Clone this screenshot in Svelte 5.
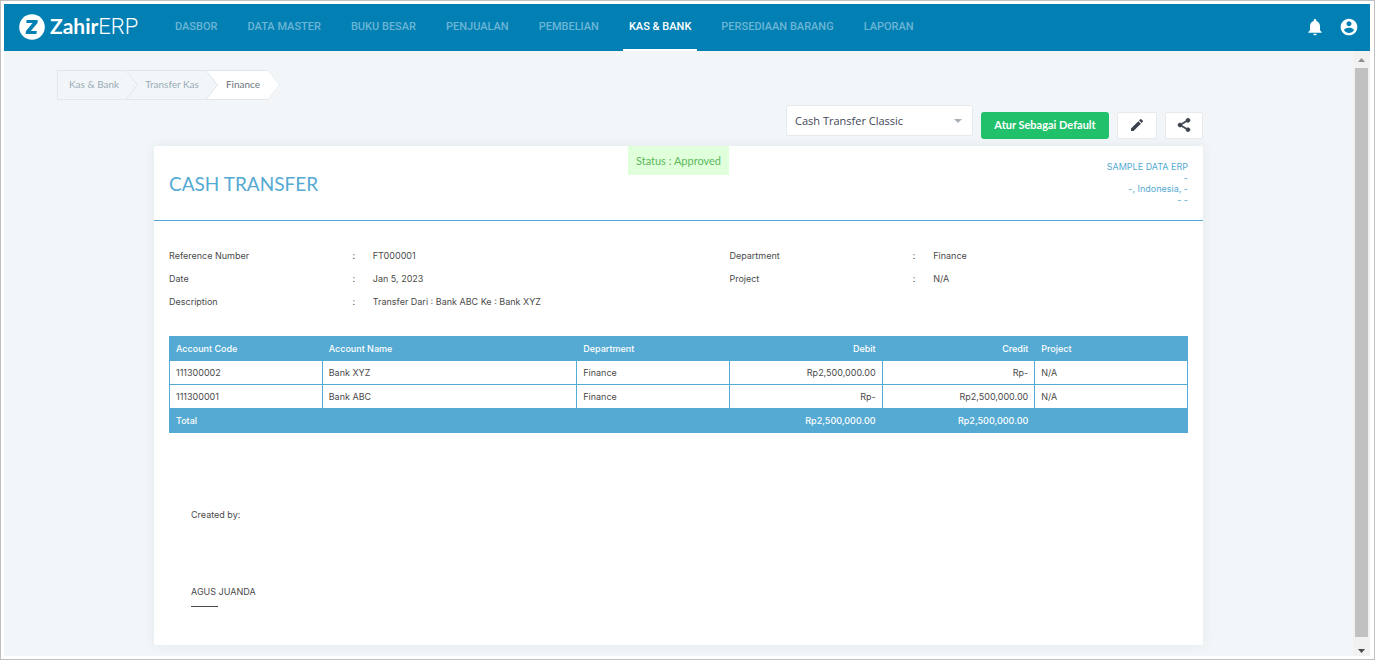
<script>
  const menu = ['Dasbor', 'Data Master', 'Buku Besar', 'Penjualan', 'Pembelian', 'Kas & Bank', 'Persediaan Barang', 'Laporan'];
  const activeMenu = 'Kas & Bank';

  const info = [
    ['Reference Number', 'FT000001', 'Department', 'Finance'],
    ['Date', 'Jan 5, 2023', 'Project', 'N/A'],
    ['Description', 'Transfer Dari : Bank ABC Ke : Bank XYZ', '', '']
  ];

  const entries = [
    { code: '111300002', name: 'Bank XYZ', dept: 'Finance', debit: 'Rp2,500,000.00', credit: 'Rp-', project: 'N/A' },
    { code: '111300001', name: 'Bank ABC', dept: 'Finance', debit: 'Rp-', credit: 'Rp2,500,000.00', project: 'N/A' }
  ];
</script>

<div class="window">
  <header class="topbar">
    <a class="logo" href="#home">
      <svg width="26" height="26" viewBox="0 0 26 26" aria-hidden="true">
        <circle cx="13" cy="13" r="12.8" fill="#fff" />
        <path d="M7.600 6h11.200l-.3 2.900-6.700 8.200h6l-.4 2.900H6.600l.4-3 6.600-8.100H7.300z" fill="#0280b4" />
      </svg>
      <span class="brand">Zahir<span class="erp">ERP</span></span>
    </a>
    <nav class="menu">
      {#each menu as item}
        <a href="#menu" class:active={item === activeMenu}>{item}</a>
      {/each}
    </nav>
    <div class="account">
      <button type="button" aria-label="Notifikasi">
        <svg width="20" height="20" viewBox="0 0 24 24" fill="#fff"><path d="M12 22c1.1 0 2-.9 2-2h-4c0 1.1.89 2 2 2zm6-6v-5c0-3.07-1.64-5.64-4.5-6.32V4c0-.83-.67-1.5-1.5-1.5s-1.5.67-1.5 1.5v.68C7.63 5.36 6 7.92 6 11v5l-2 2v1h16v-1l-2-2z" /></svg>
      </button>
      <button type="button" aria-label="Akun">
        <svg width="20" height="20" viewBox="0 0 24 24" fill="#fff"><path d="M12 2C6.48 2 2 6.48 2 12s4.48 10 10 10 10-4.48 10-10S17.52 2 12 2zm0 3c1.66 0 3 1.34 3 3s-1.34 3-3 3-3-1.34-3-3 1.34-3 3-3zm0 14.2c-2.5 0-4.71-1.28-6-3.22.03-1.99 4-3.08 6-3.08 1.99 0 5.97 1.09 6 3.08-1.29 1.94-3.5 3.22-6 3.22z" /></svg>
      </button>
    </div>
  </header>

  <div class="viewport">
    <main>
      <nav class="crumbs" aria-label="Breadcrumb">
        <a class="first" href="#kas">Kas &amp; Bank</a>
        <svg width="12" height="30" viewBox="0 0 12 30" fill="none" stroke="#e1e7ea"><path d="M0 .5h12M0 29.5h12M0 .5L11.5 15 0 29.5" /></svg>
        <a href="#transfer">Transfer Kas</a>
        <svg width="12" height="30" viewBox="0 0 12 30" fill="none" stroke="#e1e7ea"><path d="M0 0h12v30H0l11.5-15z" fill="#fff" stroke="none" /><path d="M0 .5h12M0 29.5h12M0 .5L11.5 15 0 29.5" /></svg>
        <span class="current">Finance</span>
        <svg width="12" height="30" viewBox="0 0 12 30" fill="#fff" stroke="#e9eef1"><path d="M0 .5L11.5 15 0 29.5" /></svg>
      </nav>

      <div class="toolbar">
        <div class="picker">
          <select aria-label="Template">
            <option>Cash Transfer Classic</option>
          </select>
          <svg width="8" height="4" viewBox="0 0 8 4" aria-hidden="true"><path d="M0 0h8L4 4z" fill="#a9b0b8" /></svg>
        </div>
        <button type="button" class="primary">Atur Sebagai Default</button>
        <button type="button" class="tool edit" aria-label="Ubah">
          <svg width="16" height="16" viewBox="0 0 24 24" fill="#3a414b"><path d="M3 17.25V21h3.75L17.81 9.94l-3.75-3.75L3 17.25zM20.71 7.04c.39-.39.39-1.02 0-1.41l-2.34-2.34c-.39-.39-1.02-.39-1.41 0l-1.83 1.83 3.75 3.75 1.83-1.83z" /></svg>
        </button>
        <button type="button" class="tool" aria-label="Bagikan">
          <svg width="16" height="16" viewBox="0 0 24 24" fill="#3a414b" stroke="#3a414b"><path d="M18 16.08c-.76 0-1.44.3-1.96.77L8.91 12.7c.05-.23.09-.46.09-.7s-.04-.47-.09-.7l7.05-4.11c.54.5 1.25.81 2.04.81 1.66 0 3-1.34 3-3s-1.34-3-3-3-3 1.34-3 3c0 .24.04.47.09.7L8.04 9.81C7.5 9.31 6.79 9 6 9c-1.66 0-3 1.34-3 3s1.34 3 3 3c.79 0 1.5-.31 2.04-.81l7.12 4.16c-.05.21-.08.43-.08.65 0 1.61 1.31 2.92 2.92 2.92s2.92-1.31 2.92-2.92-1.31-2.92-2.92-2.92z" /></svg>
        </button>
      </div>

      <article class="sheet">
        <header class="sheet-head">
          <h1>CASH TRANSFER</h1>
          <div class="status">Status : Approved</div>
          <address>SAMPLE DATA ERP<br />-<br />-, Indonesia, -<br />- -</address>
        </header>

        <div class="sheet-body">
          <div class="info">
            {#each info as [labelA, valueA, labelB, valueB]}
              <span>{labelA}</span><span>:</span><span>{valueA}</span>
              <span>{labelB}</span><span>{labelB ? ':' : ''}</span><span>{valueB}</span>
            {/each}
          </div>

          <table>
            <colgroup>
              <col class="std" /><col class="wide" /><col class="std" /><col class="std" /><col class="std" /><col class="std" />
            </colgroup>
            <thead>
              <tr>
                <th>Account Code</th><th>Account Name</th><th>Department</th>
                <th class="num">Debit</th><th class="num">Credit</th><th>Project</th>
              </tr>
            </thead>
            <tbody>
              {#each entries as e}
                <tr>
                  <td>{e.code}</td><td>{e.name}</td><td>{e.dept}</td>
                  <td class="num">{e.debit}</td><td class="num">{e.credit}</td><td>{e.project}</td>
                </tr>
              {/each}
            </tbody>
            <tfoot>
              <tr>
                <th colspan="3">Total</th>
                <td class="num">Rp2,500,000.00</td><td class="num">Rp2,500,000.00</td><td></td>
              </tr>
            </tfoot>
          </table>

          <div class="signature">
            <div>Created by:</div>
            <div class="signer">AGUS JUANDA</div>
            <div class="rule"></div>
          </div>
        </div>
      </article>
    </main>

    <div class="scrollbar" aria-hidden="true">
      <svg width="7" height="4" viewBox="0 0 7 4"><path d="M0 4h7L3.5 0z" fill="#8f8f8f" /></svg>
      <div class="thumb"></div>
      <svg width="7" height="4" viewBox="0 0 7 4"><path d="M0 0h7L3.5 4z" fill="#4a4a4a" /></svg>
    </div>
  </div>
</div>

<style>
  :global(body) {
    margin: 0;
    background: #fff;
  }
  .window {
    box-sizing: border-box;
    min-height: 100vh;
    display: flex;
    flex-direction: column;
    border: 1px solid #c0c0c0;
    padding: 3px 4px 3px 3px;
    font-family: Inter, "Open Sans", sans-serif;
    font-size: 9px;
    line-height: 12px;
    color: #4a4a4a;
  }
  a {
    color: inherit;
    text-decoration: none;
  }
  button {
    border: 0;
    padding: 0;
    cursor: pointer;
  }
  svg {
    display: block;
    flex: none;
  }

  .topbar {
    display: flex;
    height: 47px;
    padding: 0 11px 0 15px;
    background: #0280b4;
    color: #fff;
  }
  .logo {
    display: flex;
    align-items: center;
    gap: 5px;
    width: 150px;
    height: 45px;
  }
  .brand {
    font: 700 21px/26px Lato, sans-serif;
  }
  .erp {
    font: 300 22px/26px Roboto, sans-serif;
  }
  .menu {
    display: flex;
    gap: 18px;
    flex: 1;
  }
  .menu a {
    display: flex;
    align-items: center;
    padding: 0 6px;
    border-bottom: 2px solid transparent;
    font: 500 11px/14px Roboto, sans-serif;
    text-transform: uppercase;
    white-space: nowrap;
    color: #6cb5d4;
  }
  .menu a.active {
    color: #fff;
    border-bottom-color: #fff;
  }
  .account {
    display: flex;
    align-items: center;
    gap: 14px;
    height: 45px;
  }
  .account button {
    background: none;
  }

  .viewport {
    flex: 1;
    display: flex;
    background: #f2f6f9;
  }
  main {
    flex: 1;
    padding: 19px 150px 11px;
  }
  .crumbs {
    display: flex;
    height: 30px;
    margin-left: -97px;
    font: 400 10px/26px Lato, sans-serif;
    color: #9aacb6;
  }
  .crumbs a,
  .crumbs span {
    padding: 0 7px;
    border: 1px solid #e1e7ea;
    border-width: 1px 0;
  }
  .crumbs a.first {
    padding-left: 11px;
    border-left-width: 1px;
  }
  .crumbs .current {
    padding: 0 8px;
    background: #fff;
    color: #6b737a;
  }

  .toolbar {
    display: flex;
    justify-content: flex-end;
    align-items: flex-end;
    gap: 8px;
    margin: 5px 0 7px;
  }
  .picker {
    display: grid;
    align-items: center;
    width: 187px;
    margin-bottom: 3px;
  }
  .picker select,
  .picker svg {
    grid-area: 1 / 1;
  }
  .picker select {
    appearance: none;
    height: 31px;
    padding: 0 8px;
    border: 1px solid #e6eaed;
    border-radius: 2px;
    background: #fff;
    color: #3f4756;
    font: 400 11px/16px "Open Sans", sans-serif;
  }
  .picker svg {
    justify-self: end;
    margin-right: 11px;
    pointer-events: none;
  }
  .primary {
    height: 27px;
    width: 128px;
    border-radius: 3px;
    background: #21c06a;
    color: #fff;
    padding-bottom: 2px;
    font: 700 11px/16px Lato, sans-serif;
  }
  .tool {
    display: flex;
    align-items: center;
    justify-content: center;
    width: 38px;
    height: 27px;
    padding-bottom: 1px;
    border: 1px solid #e6eaed;
    border-radius: 2px;
    background: #fff;
  }
  .tool.edit {
    width: 40px;
  }

  .sheet {
    background: #fff;
    border-radius: 2px;
    box-shadow: 0 0 12px rgba(40, 60, 80, 0.08);
  }
  .sheet-head {
    display: grid;
    grid-template-columns: 1fr auto 1fr;
    height: 74px;
    padding: 0 15px;
    border-bottom: 1px solid #54aad3;
    color: #54aad3;
  }
  h1 {
    margin: 0;
    padding-top: 26px;
    font: 400 19px/24px Lato, sans-serif;
  }
  .status {
    align-self: start;
    padding: 0 8px;
    background: #e0ffdb;
    color: #5cb85c;
    font: 400 11px/29px Lato, sans-serif;
  }
  address {
    padding-top: 15px;
    font-style: normal;
    line-height: 11px;
    text-align: right;
  }
  .sheet-body {
    padding: 23px 15px 38px;
  }
  .info {
    display: grid;
    grid-template-columns: 18% 2% 35% 18% 2% 25%;
    line-height: 23px;
    margin-bottom: 23px;
  }

  table {
    width: 100%;
    table-layout: fixed;
    border-collapse: collapse;
    line-height: 15px;
  }
  .std {
    width: 15%;
  }
  .wide {
    width: 25%;
  }
  th,
  td {
    height: 15px;
    padding: 4px 6px;
    border: 1px solid #54aad3;
    font-weight: 400;
    text-align: left;
  }
  thead th,
  tfoot th,
  tfoot td {
    background: #54aad3;
    color: #fff;
    font-weight: 500;
  }
  th.num,
  td.num {
    text-align: right;
  }

  .signature {
    padding: 76px 22px 0;
  }
  .signer {
    margin-top: 65px;
  }
  .rule {
    width: 27px;
    margin-top: 8px;
    border-top: 1px solid #4a4a4a;
  }

  .scrollbar {
    display: flex;
    flex-direction: column;
    align-items: center;
    gap: 6px;
    width: 17px;
    box-sizing: border-box;
    padding: 7px 0 3px;
    background: #f1f1f1;
  }
  .thumb {
    flex: 1;
    width: 13px;
    margin-bottom: 6px;
    background: #c1c1c1;
  }
</style>
